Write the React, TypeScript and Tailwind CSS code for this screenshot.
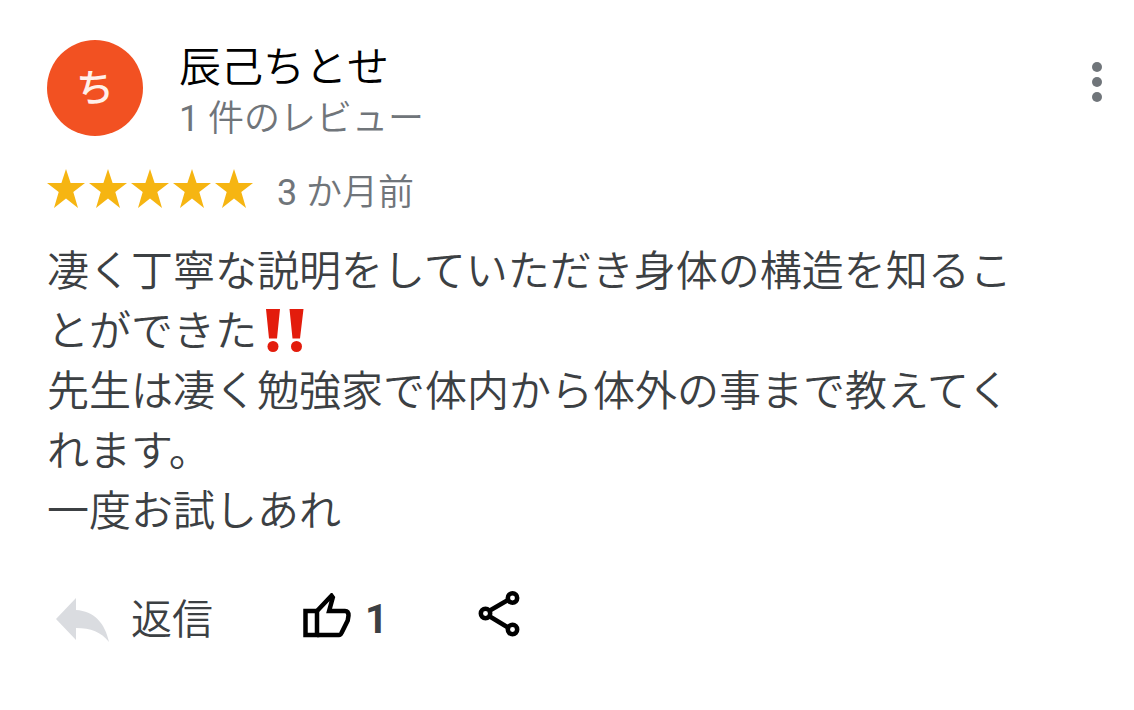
import React, { FC, useState } from 'react'

const STARS = [1, 2, 3, 4, 5]

const Star: FC = () => (
    <svg viewBox="0 0 38 40" className="w-[38px] h-10" fill="#f6b512" aria-hidden="true">
        <path d="M19 1l4.600 14H38L26.300 23.900 31 40 19 30.500 7 40l4.700-16.100L0 15h14.400z" />
    </svg>
)

const DoubleExclamation: FC = () => (
    <svg viewBox="0 0 42 44" className="mb-2 ml-2 inline-block h-11 w-[42px] align-middle" fill="#e31c0c" role="img" aria-label="‼️">
        <path d="M1 0h14l-3 29.500H4zM24.500 0h14l-3.500 29.500H27.500z" />
        <circle cx="8" cy="37.500" r="5.500" />
        <circle cx="31.500" cy="37.500" r="5.500" />
    </svg>
)

const App: FC = () => {
    const [likes, setLikes] = useState(1)

    return (
        <main className="min-h-screen bg-white pt-10 pb-12 pl-[47px] pr-8 font-['Roboto','Noto_Sans_CJK_JP',sans-serif] font-[350] text-[#3c4043]">
            {/* Header */}
            <header className="flex items-start">
                <div className="flex size-24 shrink-0 items-center justify-center rounded-full bg-[#f25122] text-[38px] font-medium leading-none text-[#fff0ea]">
                    ち
                </div>
                <div className="ml-8 grow pl-1">
                    <h1 className="text-[42px] leading-[56px] text-black">辰己ちとせ</h1>
                    <p className="text-[36px] leading-[46px] text-[#70757a]">
                        <span className="font-normal">1</span> 件のレビュー
                    </p>
                </div>
                <button type="button" aria-label="その他" className="mt-[22px] cursor-pointer">
                    <svg viewBox="0 0 10 40" className="h-10 w-[10px]" fill="#70757a">
                        <circle cx="5" cy="5" r="5" />
                        <circle cx="5" cy="20" r="5" />
                        <circle cx="5" cy="35" r="5" />
                    </svg>
                </button>
            </header>

            {/* Rating */}
            <div className="mt-[26px] flex items-start gap-6">
                <div className="flex gap-1" role="img" aria-label="5 つ星">
                    {STARS.map((n) => (
                        <Star key={n} />
                    ))}
                </div>
                <p className="text-[36px] leading-[50px] text-[#70757a]">
                    <span className="font-normal">3</span> か月前
                </p>
            </div>

            {/* Review text */}
            <p className="mt-6 max-w-[980px] text-[42px] leading-[60px]">
                凄く丁寧な説明をしていただき身体の構造を知るこ
                <br />
                とができた
                <DoubleExclamation />
                <br />
                先生は凄く勉強家で体内から体外の事まで教えてく
                <br />
                れます。
                <br />
                一度お試しあれ
            </p>

            {/* Actions */}
            <div className="mt-12 flex items-center">
                <button type="button" className="flex cursor-pointer items-center gap-[22px] pl-2 text-[41px] leading-[60px]">
                    <svg viewBox="0 0 54 44" className="h-11 w-[54px]" fill="#dadce0" aria-hidden="true">
                        <path d="M21 0v12C39 13 50 25 54 44 46 34 36 30 21 30v12L1 21z" />
                    </svg>
                    返信
                </button>
                <button
                    type="button"
                    aria-label="いいね"
                    className="ml-[90px] flex cursor-pointer items-center gap-3 text-[40px] font-bold leading-[60px]"
                    onClick={() => setLikes(likes === 1 ? 2 : 1)}
                >
                    <svg viewBox="0 0 50 46" className="mb-2 h-[46px] w-[50px]" fill="none" stroke="#000" strokeWidth="4.500" aria-hidden="true">
                        <path d="M2.500 18h11.500v24H2.500z" />
                        <path d="M14 18L28.500 2.700l1.300 1.800-3.700 13.500H42c2.500 0 3.500 2 3.500 4.500l-.8 5-6.200 12.500c-.5 1.200-1.200 2-2.500 2H14" />
                    </svg>
                    {likes}
                </button>
                <button type="button" aria-label="共有" className="mb-3 ml-[90px] cursor-pointer">
                    <svg viewBox="0 0 42 46" className="h-[46px] w-[42px]" fill="none" stroke="#000" strokeWidth="4.500" aria-hidden="true">
                        <path d="M11 20L30 9M11 25l19 11.500" />
                        <circle cx="7.500" cy="22.500" r="4.700" />
                        <circle cx="34.500" cy="7" r="4.700" />
                        <circle cx="34.500" cy="38.500" r="4.700" />
                    </svg>
                </button>
            </div>
        </main>
    )
}

export default App
